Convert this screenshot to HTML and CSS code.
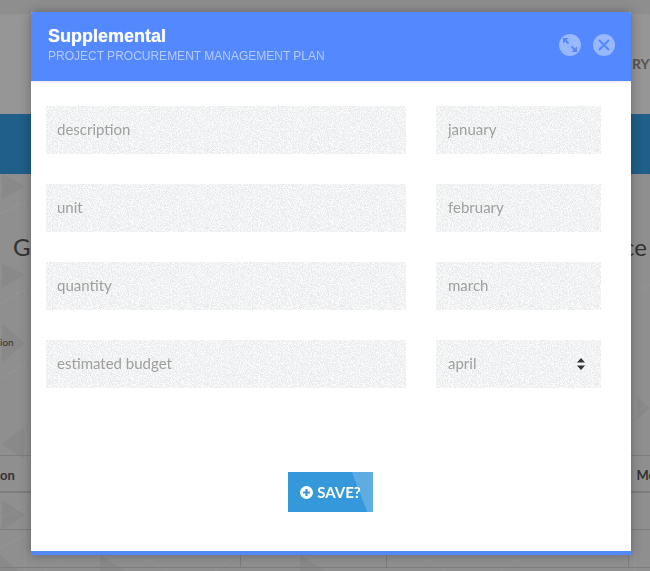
FILE: index.html
```html
<!DOCTYPE html>
<html lang="en">
<head>
<meta charset="utf-8">
<title>Supplemental</title>
<link rel="stylesheet" href="styles.css">
</head>
<body>
<div class="page">
  <div class="topbar"></div>
  <div class="nav"><span class="nav-text">RY</span></div>
  <div class="band"></div>
  <div class="content">
    <svg class="tri-bg" width="650" height="397" aria-hidden="true">
      <g fill="#000" fill-opacity=".04">
        <path d="M2 0l23 12-23 14z"/><path d="M2 89l23 12-23 13z"/>
        <path d="M2 149l23 20-23 20z"/><path d="M25 253v33l-23-16z"/>
        <path d="M2 326l23 15-23 15z"/><path d="M637 223l13 11-13 12z"/>
        <path d="M300 381l25 16h-25z"/><path d="M100 381l25 16h-25z"/>
        <path d="M0 381l18 16h-18z"/>
      </g>
      <g stroke="#fff" stroke-opacity=".06" fill="none">
        <path d="M0 130l25-15M0 40l25-12M0 205l25-15M0 345l25-14M0 375l25-14M25 0v397"/>
        <path d="M635 0v397M635 120l15-10M635 240l15-12"/>
        <path d="M45 397l25-17M140 380l28 17M240 380l-25 17M420 380l25 17M500 397l22-17"/>
      </g>
      <path d="M240.500 356v38M386.500 356v38M628.500 381v13" stroke="#7d7d7d" fill="none"/>
    </svg>
    <h2 class="heading"><span>G</span><span>ce</span></h2>
    <div class="desc">ion</div>
    <div class="table-row head"><span>on</span><span class="cut">Mo</span></div>
    <div class="table-row body"></div>
    <div class="table-row last"></div>
  </div>
</div>

<section class="modal">
  <header class="modal-head">
    <div class="titles">
      <h1 class="title">Supplemental</h1>
      <p class="subtitle">PROJECT PROCUREMENT MANAGEMENT PLAN</p>
    </div>
    <div class="actions">
      <button class="round" aria-label="Expand">
        <svg width="22" height="22" viewBox="0 0 22 22"><g fill="none" stroke="#5488ff"><path d="M5.500 5.500l4 4" stroke-width="2"/><path d="M12.500 12.500l4 4" stroke-width="2"/></g><g fill="#5488ff"><path d="M4 4h5.500L4 9.500z"/><path d="M18 18h-5.500l5.500-5.500z"/></g></svg>
      </button>
      <button class="round" aria-label="Close">
        <svg width="22" height="22" viewBox="0 0 22 22"><path d="M6 6l10 10M16 6L6 16" stroke="#5488ff" stroke-width="2" fill="none"/></svg>
      </button>
    </div>
  </header>
  <form class="modal-body">
    <div class="fields">
      <input class="field" placeholder="description">
      <input class="field" placeholder="january">
      <input class="field" placeholder="unit">
      <input class="field" placeholder="february">
      <input class="field" placeholder="quantity">
      <input class="field" placeholder="march">
      <input class="field" placeholder="estimated budget">
      <div class="select-wrap">
        <select class="field select"><option>april</option></select>
        <svg class="updown" width="8" height="12" viewBox="0 0 8 12"><path d="M4 0l4 4.500H0zM4 12L0 7.500h8z" fill="#333"/></svg>
      </div>
    </div>
    <div class="save-row">
      <button type="button" class="save">
        <svg width="13" height="13" viewBox="0 0 13 13"><circle cx="6.500" cy="6.500" r="6.500" fill="#fff"/><path d="M6.500 3v7M3 6.500h7" stroke="#3498db" stroke-width="2.200"/></svg>
        <span>SAVE?</span>
      </button>
    </div>
  </form>
</section>
</body>
</html>
```
FILE: styles.css
```css
* { box-sizing: border-box; }
html, body { margin: 0; height: 100%; overflow: hidden; }
body { background: #8f8f8f; font-family: Lato, "Liberation Sans", sans-serif; }

.page { height: 571px; display: flex; flex-direction: column; color: #3a3a3a; }
.topbar { height: 14px; background: #8e8e8e; }
.nav { height: 100px; background: #969696; display: flex; justify-content: flex-end; align-items: center; padding: 0 0 2px; }
.nav-text { font-size: 14px; font-weight: 700; color: #555; width: 18px; overflow: hidden; }
.band { height: 60px; background: #1f5f8a; }
.content { flex: 1; position: relative; background: #8f8f8f; display: flex; flex-direction: column; overflow: hidden; }
.tri-bg { position: absolute; left: 0; top: 0; }

.heading { position: relative; margin: 58px 0 0; font-size: 24px; font-weight: 400; line-height: 30px; color: #333; display: flex; justify-content: space-between; padding: 0 3px 0 13px; }
.desc { position: relative; font-size: 10px; line-height: 12px; margin-top: 74px; color: #333; height: 12px; }
.table-row { position: relative; display: flex; justify-content: space-between; border-bottom: 1px solid #7d7d7d; }
.table-row.head { margin-top: 107px; height: 38px; padding: 10px 0 0; border-top: 1px solid #7d7d7d; border-bottom: 2px solid #7d7d7d; font-size: 13px; font-weight: 700; line-height: 18px; color: #333; }
.cut { margin-right: -6px; }
.table-row.body { height: 37px; }
.table-row.last { height: 38px; }

.modal { position: fixed; left: 31px; top: 12px; width: 600px; height: 543px; background: #fff; border-radius: 2px 2px 0 0; border-bottom: 4px solid #5488ff; box-shadow: 0 0 12px rgba(0,0,0,.3); display: flex; flex-direction: column; }
.modal-head { height: 69px; flex: none; background: #5488ff; border-radius: 2px 2px 0 0; display: flex; justify-content: space-between; align-items: center; padding: 0 16px 3px 17px; box-shadow: 0 1px 2px rgba(0,0,0,.12); }
.title { margin: -2px 0 0; font: 700 18px/20px "Liberation Sans", sans-serif; color: #fff; text-shadow: 0 0 1px rgba(255,255,255,.7); }
.subtitle { margin: 3px 0 0; font: 400 12px/14px "Liberation Sans", sans-serif; color: #b4cbff; }
.actions { display: flex; gap: 12px; }
.round { width: 22px; height: 22px; padding: 0; border: 0; border-radius: 50%; background: #98b8ff; display: block; }
.round svg { display: block; }

.modal-body { flex: 1; padding: 25px 30px 39px 15px; display: flex; flex-direction: column; justify-content: space-between; }
.fields { display: grid; grid-template-columns: 360px 165px; column-gap: 30px; row-gap: 30px; }
.field { display: block; width: 100%; height: 48px; border: 0; border-radius: 0; padding: 0 12px 2px 11px; outline: 0; font: 400 15px/46px Lato, sans-serif; color: #9f9f9f;
  background-color: #e6e8ea;
  background-image: url("data:image/svg+xml,%3Csvg xmlns='http://www.w3.org/2000/svg' width='200' height='100'%3E%3Cfilter id='n'%3E%3CfeTurbulence type='fractalNoise' baseFrequency='1.1' numOctaves='2' seed='4'/%3E%3CfeColorMatrix values='0 0 0 0 1 0 0 0 0 1 0 0 0 0 1 2.6 0 0 0 -.85'/%3E%3C/filter%3E%3Crect width='200' height='100' filter='url(%23n)'/%3E%3C/svg%3E");
}
.field::placeholder { color: #9f9f9f; opacity: 1; }
.fields > input:nth-child(even), .select-wrap .field { padding-left: 12px; }
.select-wrap { position: relative; }
.select { appearance: none; -webkit-appearance: none; }
.updown { position: absolute; right: 16px; top: 18px; }

.save-row { display: flex; justify-content: center; padding-left: 13px; }
.save { width: 85px; height: 40px; border: 0; padding: 0 0 0 1px; display: flex; align-items: center; justify-content: center; gap: 4px; color: #fff; font: 700 15px/40px Lato, sans-serif; background: linear-gradient(69deg, #3498db 0 79%, #5dade2 79% 100%); }
.save svg { flex: none; }
```
